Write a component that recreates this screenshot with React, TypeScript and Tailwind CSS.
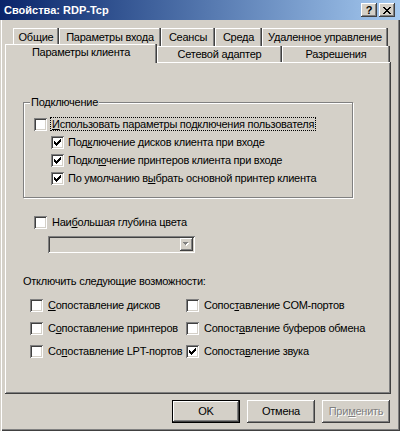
import React from "react";

const raised =
  "shadow-[inset_-1px_-1px_#404040,inset_1px_1px_#fff,inset_-2px_-2px_#808080]";
const sunken =
  "shadow-[inset_1px_1px_#808080,inset_-1px_-1px_#fff,inset_2px_2px_#404040,inset_-2px_-2px_#d4d0c8]";
const tabEdge =
  "shadow-[inset_-1px_0_#404040,inset_-2px_0_#808080,inset_1px_1px_#fff]";

// "&" marks the mnemonic letter
function Label({ text }: { text: string }) {
  const i = text.indexOf("&");
  if (i < 0) return <>{text}</>;
  return (
    <>
      {text.slice(0, i)}
      <span className="underline underline-offset-[1px]">{text[i + 1]}</span>
      {text.slice(i + 2)}
    </>
  );
}

function Check({ checked }: { checked?: boolean }) {
  return (
    <span
      className={`flex h-[13px] w-[13px] shrink-0 items-center justify-center bg-white ${sunken}`}
    >
      {checked && (
        <svg width="7" height="7" viewBox="0 0 7 7">
          <path
            d="M0 2h1v3H0zM1 3h1v3H1zM2 4h1v3H2zM3 3h1v3H3zM4 2h1v3H4zM5 1h1v3H5zM6 0h1v3H6z"
            fill="#000"
          />
        </svg>
      )}
    </span>
  );
}

function CheckRow({
  text,
  checked,
  className = "",
}: {
  text: string;
  checked?: boolean;
  className?: string;
}) {
  return (
    <div className={`flex h-[18px] items-center gap-[4px] ${className}`}>
      <Check checked={checked} />
      <span className="whitespace-nowrap">
        <Label text={text} />
      </span>
    </div>
  );
}

const backTabs = [
  { title: "Общие", w: "w-[46px]" },
  { title: "Параметры входа", w: "w-[102px]" },
  { title: "Сеансы", w: "w-[54px]" },
  { title: "Среда", w: "w-[47px]" },
  { title: "Удаленное управление", w: "w-[126px]" },
];

const features = [
  { text: "&Сопоставление дисков" },
  { text: "Сопос&тавление COM-портов" },
  { text: "С&опоставление принтеров" },
  { text: "Сопост&авление буферов обмена" },
  { text: "Со&поставление LPT-портов" },
  { text: "Сопоста&вление звука", checked: true },
];

export default function App() {
  return (
    <div
      className={`flex h-[431px] w-[400px] flex-col bg-[#d4d0c8] font-['Liberation_Sans',Arial,sans-serif] text-[11px] leading-[13px] tracking-[-0.25px] text-black shadow-[inset_1px_0_#d4d0c8,inset_2px_0_#fff,inset_-1px_-1px_#404040,inset_-2px_-2px_#808080]`}
    >
      {/* title bar */}
      <div className="flex h-[20px] items-center justify-between bg-linear-to-r from-[#0a246a] to-[#a6caf0] pl-[4px] pr-[5px]">
        <span className="font-bold tracking-normal text-white">
          Свойства: RDP-Tcp
        </span>
        <div className="flex gap-[2px]">
          <span
            className={`flex h-[14px] w-[16px] items-center justify-center bg-[#d4d0c8] text-[11px] font-bold leading-[11px] ${raised}`}
          >
            ?
          </span>
          <span
            className={`flex h-[14px] w-[16px] items-center justify-center bg-[#d4d0c8] ${raised}`}
          >
            <svg width="8" height="7" viewBox="0 0 8 7">
              <path
                d="M0 0h2v1H0zM6 0h2v1H6zM1 1h2v1H1zM5 1h2v1H5zM2 2h4v1H2zM3 3h2v1H3zM2 4h4v1H2zM1 5h2v1H1zM5 5h2v1H5zM0 6h2v1H0zM6 6h2v1H6z"
                fill="#000"
              />
            </svg>
          </span>
        </div>
      </div>

      {/* back row of tabs */}
      <div className="mt-[8px] flex h-[18px] pl-[13px]">
        {backTabs.map((t) => (
          <div
            key={t.title}
            className={`flex items-start justify-center pt-[3px] ${t.w} ${tabEdge}`}
          >
            {t.title}
          </div>
        ))}
      </div>

      {/* front row of tabs */}
      <div className="flex h-[16px] pl-[5px]">
        <div
          className={`relative z-10 -mt-[2px] flex h-[19px] w-[152px] items-start justify-center bg-[#d4d0c8] pt-[2px] ${tabEdge}`}
        >
          Параметры клиента
        </div>
        <div
          className={`flex w-[125px] items-start justify-center pt-[2px] ${tabEdge}`}
        >
          Сетевой адаптер
        </div>
        <div
          className={`flex w-[108px] items-start justify-center pt-[2px] ${tabEdge}`}
        >
          Разрешения
        </div>
      </div>

      {/* page */}
      <div
        className={`ml-[5px] flex h-[332px] w-[386px] flex-col pl-[18px] pt-[40px] ${raised}`}
      >
        <div className="relative h-[96px] w-[330px] border border-[#808080] pl-[10px] pt-[12px] shadow-[inset_1px_1px_#fff,1px_1px_#fff]">
          <span className="absolute -top-[7px] left-[6px] bg-[#d4d0c8] px-[1px]">
            Подключение
          </span>
          <div className="flex h-[18px] items-center gap-[3px]">
            <Check />
            <span className="whitespace-nowrap border border-dotted border-black px-[1px] leading-[12px]">
              <Label text="&Использовать параметры подключения пользователя" />
            </span>
          </div>
          <CheckRow
            className="ml-[17px]"
            text="Под&ключение дисков клиента при входе"
            checked
          />
          <CheckRow
            className="ml-[17px]"
            text="Подкл&ючение принтеров клиента при входе"
            checked
          />
          <CheckRow
            className="ml-[17px]"
            text="По умолчанию в&ыбрать основной принтер клиента"
            checked
          />
        </div>

        <CheckRow
          className="ml-[11px] mt-[15px] gap-[5px]"
          text="Наи&большая глубина цвета"
        />
        <div
          className={`ml-[25px] mt-[5px] flex h-[17px] w-[147px] justify-end bg-[#d4d0c8] p-[2px] ${sunken}`}
        >
          <span
            className={`flex w-[13px] items-center justify-center ${raised}`}
          >
            <svg width="7" height="5" viewBox="0 0 7 5">
              <path d="M1 1h5v1H1zM2 2h3v1H2zM3 3h1v1H3z" fill="#fff" />
              <path d="M0 0h5v1H0zM1 1h3v1H1zM2 2h1v1H2z" fill="#808080" />
            </svg>
          </span>
        </div>

        <div className="mt-[22px] whitespace-nowrap">
          Отключить следующие возможности:
        </div>
        <div className="ml-[7px] mt-[6px] grid grid-cols-[156px_156px]">
          {features.map((g) => (
            <div key={g.text} className="flex h-[23px] items-center gap-[5px]">
              <Check checked={g.checked} />
              <span className="whitespace-nowrap">
                <Label text={g.text} />
              </span>
            </div>
          ))}
        </div>
      </div>

      {/* buttons */}
      <div className="mt-[6px] flex justify-end gap-[7px] pr-[10px]">
        <button
          className={`flex h-[23px] w-[68px] items-center justify-center border border-black bg-[#d4d0c8] ${raised}`}
        >
          OK
        </button>
        <button
          className={`flex h-[23px] w-[68px] items-center justify-center bg-[#d4d0c8] ${raised}`}
        >
          Отмена
        </button>
        <button
          className={`flex h-[23px] w-[68px] items-center justify-center bg-[#d4d0c8] text-[#808080] [text-shadow:1px_1px_#fff] ${raised}`}
        >
          <Label text="При&менить" />
        </button>
      </div>
    </div>
  );
}
